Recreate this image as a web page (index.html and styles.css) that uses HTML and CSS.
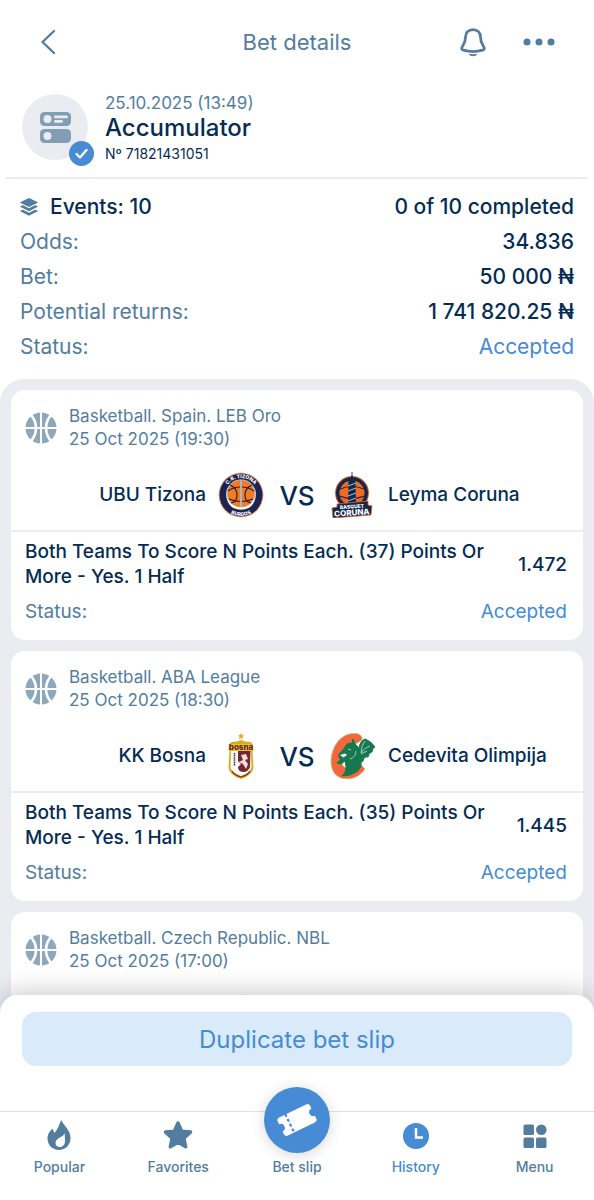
FILE: index.html
```html
<!DOCTYPE html>
<html lang="en">
<head>
  <meta charset="UTF-8">
  <meta name="viewport" content="width=device-width, initial-scale=1.0">
  <title>Bet details</title>
  <link rel="stylesheet" href="styles.css">
</head>
<body>
  <!-- Shared icons -->
  <svg class="sprite" aria-hidden="true">
    <symbol id="ball" viewBox="0 0 32 32">
      <circle cx="16" cy="16" r="15.5" fill="#8da8bd"/>
      <g fill="none" stroke="#fff" stroke-width="2">
        <path d="M16 0v32M0 16h32"/>
        <path d="M5 2Q11 8 11 16T5 30M27 2Q21 8 21 16T27 30" stroke-width="2.6"/>
      </g>
    </symbol>
  </svg>

  <div class="app">
    <header class="topbar">
      <button class="icon-button" aria-label="Back">
        <svg width="16" height="26" viewBox="0 0 16 26"><path d="M14 2 2.5 13 14 24" fill="none" stroke="#527d9f" stroke-width="2.4" stroke-linecap="round" stroke-linejoin="round"/></svg>
      </button>
      <h1>Bet details</h1>
      <div class="topbar-actions">
        <button class="icon-button" aria-label="Notifications">
          <svg width="26" height="29" viewBox="0 0 26 29">
            <path d="M13 1.6c-4.800 0-7.400 3.200-7.500 7.400-.1 4.500-.6 6-2.600 8.700-1.700 2.500-1.700 3.700.5 4.400 5.700 1.700 13.500 1.700 19.200 0 2.200-.7 2.200-1.900.5-4.400-2-2.700-2.500-4.200-2.600-8.700-.1-4.200-2.700-7.400-7.500-7.400z" fill="none" stroke="#527d9f" stroke-width="2.800"/>
            <path d="M8.500 25.700q4.500.9 9 0-1.500 2.500-4.500 2.500t-4.500-2.500z" fill="#527d9f"/>
          </svg>
        </button>
        <button class="icon-button" aria-label="More">
          <svg width="32" height="8" viewBox="0 0 32 8" fill="#527d9f"><circle cx="4" cy="4" r="3.500"/><circle cx="16" cy="4" r="3.500"/><circle cx="28" cy="4" r="3.500"/></svg>
        </button>
      </div>
    </header>

    <main>
      <section class="bet-head">
        <div class="bet-type">
          <svg width="31" height="31" viewBox="0 0 31 31">
            <rect width="31" height="14" rx="4.500" fill="#819eb5"/>
            <rect y="17" width="31" height="14" rx="4.500" fill="#819eb5"/>
            <g fill="#eaecf2"><circle cx="7.500" cy="7" r="4"/><circle cx="7.500" cy="24" r="4"/><rect x="14" y="3.500" width="14" height="2.800" rx="1.400"/><rect x="14" y="8" width="9" height="2.800" rx="1.400"/></g>
          </svg>
          <svg class="bet-check" width="25" height="25" viewBox="0 0 25 25"><circle cx="12.500" cy="12.500" r="12.500" fill="#468bd4"/><path d="M7.500 13l3.500 3.500 6.500-7.500" fill="none" stroke="#fff" stroke-width="2.400" stroke-linecap="round" stroke-linejoin="round"/></svg>
        </div>
        <div>
          <p class="bet-date">25.10.2025 (13:49)</p>
          <h2>Accumulator</h2>
          <p class="bet-number">Nº 71821431051</p>
        </div>
      </section>

      <dl class="summary">
        <div class="summary-events">
          <dt>
            <svg width="18" height="18" viewBox="0 0 18 18" fill="#527d9f">
              <path d="M9 0 17.300 4Q18 4.500 17.300 5L9 9 .7 5Q0 4.500.7 4z"/>
              <path d="M.5 8 3 7.300 9 10.300l6-3 2.500.7q.5.600-.2 1L9 13.300.7 9Q0 8.600.5 8z"/>
              <path d="M.5 12.500 3 11.800l6 3 6-3 2.500.7q.5.600-.2 1L9 17.800.7 13.500q-.7-.4-.2-1z"/>
            </svg>
            Events: 10
          </dt>
          <dd>0 of 10 completed</dd>
        </div>
        <div><dt>Odds:</dt><dd>34.836</dd></div>
        <div><dt>Bet:</dt><dd>50 000 ₦</dd></div>
        <div><dt>Potential returns:</dt><dd>1 741 820.25 ₦</dd></div>
        <div><dt>Status:</dt><dd class="accepted">Accepted</dd></div>
      </dl>

      <section class="events">
        <article class="card">
          <div class="card-meta">
            <svg class="sport" width="32" height="32"><use href="#ball"/></svg>
            <p>Basketball. Spain. LEB Oro<br>25 Oct 2025 (19:30)</p>
          </div>
          <div class="teams">
            <span class="team home">UBU Tizona</span>
            <svg class="crest" viewBox="0 0 46 46">
              <circle cx="23" cy="23" r="22.500" fill="#f0a184"/>
              <circle cx="23" cy="23" r="21.500" fill="#1d254f"/>
              <circle cx="23" cy="22.500" r="15" fill="#fff"/>
              <circle cx="23" cy="22.500" r="15" fill="#1d254f" opacity=".25"/>
              <circle cx="23" cy="21.500" r="13.500" fill="#f47b20"/>
              <g fill="none" stroke="#29203c" stroke-width="1.200">
                <path d="M10 19q5-4 13-4t13 4M12 13q7 3 7 10t-6 8M34 13q-7 3-7 10t6 8M11 27q12 5 24 0"/>
                <path d="M23 8v29" stroke="#b3b8c0" stroke-width="1.800"/>
              </g>
              <path d="M9 26q4 9.500 14 9.500T37 26q-2 11.500-14 11.500T9 26z" fill="#fff"/>
              <path id="tizonaTop" d="M6 23A17 17 0 0 1 40 23" fill="none"/>
              <path id="tizonaBottom" d="M2 23a21 21 0 0 0 42 0" fill="none"/>
              <text class="crest-text"><textPath href="#tizonaTop" startOffset="50%">C.B. TIZONA</textPath></text>
              <text class="crest-text"><textPath href="#tizonaBottom" startOffset="50%">BURGOS</textPath></text>
            </svg>
            <span class="versus">VS</span>
            <svg class="crest" viewBox="0 0 46 46">
              <path d="M22 0v7" stroke="#2d4b5c" stroke-width="1"/>
              <circle cx="22" cy="21" r="17" fill="#e8602c"/>
              <circle cx="22" cy="21" r="16" fill="#12284a"/>
              <circle cx="22" cy="21" r="12.500" fill="#f26a21"/>
              <path d="M10 17q12-5 24 0M9.500 24q12 5 25 0" fill="none" stroke="#12284a" stroke-width="1.200"/>
              <path d="M18.500 9l3.500-6 3.500 6 .5 26h-8z" fill="#12284a"/>
              <path d="M18 14l8-3M18 19l8-3M18 24l8-3M18 29l8-3" stroke="#a9bed0" stroke-width="1"/>
              <path d="M7 32l31-3v4l4 1-1 9-38 3-1-10 5-1z" fill="#12284a" stroke="#e8602c" stroke-width=".8"/>
              <text class="crest-text" x="22" y="36.500" transform="rotate(-4 22 36)">BASQUET</text>
              <text class="crest-text large" x="22" y="43.500" transform="rotate(-4 22 43)">CORUNA</text>
            </svg>
            <span class="team">Leyma Coruna</span>
          </div>
          <div class="market">
            <h3>Both Teams To Score N Points Each. (37) Points Or More - Yes. 1 Half</h3>
            <strong>1.472</strong>
          </div>
          <div class="card-status"><span>Status:</span><span class="accepted">Accepted</span></div>
        </article>

        <article class="card">
          <div class="card-meta">
            <svg class="sport" width="32" height="32"><use href="#ball"/></svg>
            <p>Basketball. ABA League<br>25 Oct 2025 (18:30)</p>
          </div>
          <div class="teams">
            <span class="team home">KK Bosna</span>
            <svg class="crest" viewBox="0 0 46 46">
              <path d="M23 0l1 2 2 .2-1.500 1.500.5 2.300-2-1-2 1 .5-2.300L20 2.200l2-.2z" fill="#efa72d"/>
              <path d="M12 11q0-2 2-2 5 0 9-2 4 2 9 2 2 0 2 2l1.500 23q-.5 8-12.500 12Q11 42 10.500 34z" fill="#d7ad1d"/>
              <path d="M13 18h20l.5 16q-1 6-10.500 9-9.500-3-10.500-9z" fill="#fff"/>
              <path d="M20 18h12.500l-.5 16q-2 5-6.500 5-5.500 0-5.500-5l3-3-3-3z" fill="#722733"/>
              <path d="M23 22l5-1 2 5-3 1 3 4-2 5-3-5-4-2 4-2z" fill="#f4ddd4"/>
              <path d="M16.500 20v13" stroke="#62323a" stroke-width="1.600" stroke-dasharray="1.500 .6"/>
              <path d="M11 11h24l.5 7h-25z" fill="#edbd2d"/>
              <text class="crest-text bosna" x="23" y="17">bosna</text>
              <path d="M14 38q2 4 9 6 7-2 9-6" fill="none" stroke="#842c2d" stroke-width="1.200"/>
            </svg>
            <span class="versus">VS</span>
            <svg class="crest" viewBox="0 0 46 46">
              <path d="M27 .5C14-1 3 9 1 26c-1 13 6 20 16 20 8 0 14-4 18-10l-7-8c-3 6-6 8-11 7-5-1-6-5-4-12 2-8 7-13 13-12l6-4q1-5-5-6.500z" fill="#f1683a" stroke="#c5cd9c" stroke-width=".8"/>
              <path d="M9 21l4-4 4-6 5-1 1-4 2 5 4 4q1-7 6-9 6 2 10 8-3 1-3 5-3 0-4 5-4-1-5 4-3 1-2 5l-3 5-8 4-8 1q5-4 4-10l-1-5-4 3-4-1 4-4-2-1z" fill="#15784f" stroke="#15784f" stroke-width="1" stroke-linejoin="round"/>
              <path d="M31 20q0-7 4-12M31 20q4-6 9-7M31 21l6-3M18 16l3 1M20 26q6-2 6-8" fill="none" stroke="#9ed0b6" stroke-width="1"/>
              <path d="M10 22l5-1.500 2 1.500-3.500 2.500z" fill="#fff"/>
            </svg>
            <span class="team">Cedevita Olimpija</span>
          </div>
          <div class="market">
            <h3>Both Teams To Score N Points Each. (35) Points Or More - Yes. 1 Half</h3>
            <strong>1.445</strong>
          </div>
          <div class="card-status"><span>Status:</span><span class="accepted">Accepted</span></div>
        </article>

        <article class="card">
          <div class="card-meta">
            <svg class="sport" width="32" height="32"><use href="#ball"/></svg>
            <p>Basketball. Czech Republic. NBL<br>25 Oct 2025 (17:00)</p>
          </div>
          <div class="teams">
            <span class="team home"></span>
            <svg class="crest" viewBox="0 0 46 46"><path d="M22 1.500q2-1.500 4 0l11 11-3 25-9 7-10-7-3-25z" fill="#242a34"/></svg>
          </div>
        </article>
      </section>
    </main>

    <footer class="bottom">
      <div class="duplicate">
        <button>Duplicate bet slip</button>
      </div>
      <nav class="tabs">
        <a href="#popular">
          <svg width="24" height="30" viewBox="0 0 24 30"><path d="M14.500 0c1 5 9 9 9 18 0 7-5 12-11.500 12S.5 25 .5 18.500C.5 14 3 11 5.500 8.500c.8 2 1.200 3.200 2 4.300C11 9.500 12 4 14.500 0z" fill="#527d9f"/><path d="M17.500 13c0 4-9 4.500-9 10 0 2.500 1.800 4 4.200 4 3.300 0 5.300-2.500 5.300-6 0-3-.2-5-.5-8z" fill="#fff"/></svg>
          Popular
        </a>
        <a href="#favorites">
          <svg width="30" height="30" viewBox="0 0 30 30"><path d="M15 3l3.600 8.200 8.900.9-6.700 6 1.900 8.700-7.700-4.500-7.700 4.500 1.900-8.700-6.700-6 8.900-.9z" fill="#527d9f" stroke="#527d9f" stroke-width="3.500" stroke-linejoin="round"/></svg>
          Favorites
        </a>
        <a href="#slip">
          <span class="slip-circle">
            <svg width="40" height="40" viewBox="0 0 40 40"><g transform="rotate(-26 20 20)">
              <path d="M5 10h30q3 0 3 3v3a4 4 0 0 0 0 8v3q0 3-3 3H5q-3 0-3-3v-3a4 4 0 0 0 0-8v-3q0-3 3-3z" fill="#fff"/>
              <path d="M12 9.500v22" stroke="#468bd4" stroke-width="2.200" stroke-dasharray="3 2.400"/>
            </g></svg>
          </span>
          Bet slip
        </a>
        <a href="#history" class="active">
          <svg width="26" height="30" viewBox="0 0 26 30"><circle cx="13" cy="16" r="13" fill="#468bd4"/><path d="M13 8v9.500h7" fill="none" stroke="#fff" stroke-width="2.500"/></svg>
          History
        </a>
        <a href="#menu">
          <svg width="24" height="30" viewBox="0 0 24 30" fill="#527d9f"><rect x=".5" y="4.500" width="10.500" height="10.500" rx="1.500"/><circle cx="18.300" cy="9.700" r="5.300"/><rect x=".5" y="17.500" width="10.500" height="10.500" rx="1.500"/><rect x="13" y="17.500" width="10.500" height="10.500" rx="1.500"/></svg>
          Menu
        </a>
      </nav>
    </footer>
  </div>
</body>
</html>
```
FILE: styles.css
```css
* {
  box-sizing: border-box;
}

body {
  margin: 0;
  font-family: Inter, "Open Sans", sans-serif;
  background: #fff;
  color: #052c54;
}

h1, h2, h3, p, dl, dd {
  margin: 0;
  font-weight: 400;
}

button {
  font: inherit;
  border: 0;
  cursor: pointer;
}

svg {
  display: block;
  flex: none;
}

.sprite {
  position: absolute;
  width: 0;
  height: 0;
}

.app {
  display: flex;
  flex-direction: column;
  height: 100vh;
}

/* Top bar */
.topbar {
  display: grid;
  grid-template-columns: 1fr auto 1fr;
  align-items: center;
  height: 84px;
  padding: 0 32px;
}

.topbar h1 {
  font-size: 22px;
  line-height: 28px;
  color: #527d9f;
}

.icon-button {
  display: flex;
  justify-content: center;
  width: 32px;
  padding: 0;
  background: none;
}

.topbar-actions {
  display: flex;
  align-items: center;
  justify-content: flex-end;
  gap: 34px;
  margin-right: 7px;
}

main {
  flex: 1;
  min-height: 0;
  overflow-y: auto;
  scrollbar-width: none;
}

/* Bet header */
.bet-head {
  display: flex;
  gap: 17px;
  margin: 0 6px;
  padding: 8px 16px 11px;
  border-bottom: 2px solid #eaecf2;
}

.bet-type {
  position: relative;
  display: flex;
  align-items: center;
  justify-content: center;
  width: 66px;
  height: 66px;
  margin-top: 2px;
  border-radius: 50%;
  background: #eaecf2;
}

.bet-check {
  position: absolute;
  right: -6px;
  bottom: -6px;
}

.bet-date {
  font-size: 17px;
  line-height: 22px;
  color: #527d9f;
}

.bet-head h2 {
  font-size: 24px;
  font-weight: 500;
  line-height: 28px;
}

.bet-number {
  font-size: 14px;
  line-height: 24px;
}

/* Totals */
.summary {
  padding: 10px 20px 15px;
  font-size: 21px;
  line-height: 35px;
}

.summary div {
  display: flex;
  justify-content: space-between;
}

.summary dt {
  display: flex;
  align-items: center;
  gap: 12px;
  color: #527d9f;
}

.summary dd {
  font-weight: 500;
}

.summary .summary-events dt {
  font-weight: 500;
  color: #052c54;
}

.summary .accepted,
.accepted {
  font-weight: 400;
  color: #468bd4;
}

/* Events */
.events {
  display: flex;
  flex-direction: column;
  gap: 11px;
  padding: 11px 11px 40px;
  border-radius: 24px 24px 0 0;
  background: #eaecf2;
}

.card {
  padding: 15px 0 16px;
  border-radius: 14px;
  background: #fff;
}

.card-meta {
  display: flex;
  align-items: center;
  gap: 12px;
  padding: 0 14px;
  font-size: 17px;
  line-height: 23px;
  color: #527d9f;
}

.teams {
  display: grid;
  grid-template-columns: 1fr 46px 66px 46px 1fr;
  align-items: center;
  height: 81px;
  padding-top: 9px;
  border-bottom: 2px solid #eaecf2;
}

.crest {
  width: 46px;
  height: 46px;
}

.crest-text {
  font-size: 5px;
  font-weight: 800;
  text-anchor: middle;
  fill: #fff;
}

.crest-text.large {
  font-size: 8px;
}

.crest-text.bosna {
  font-size: 8px;
  fill: #642b25;
}

.team {
  padding: 0 12px;
  font-size: 19px;
  font-weight: 500;
  line-height: 24px;
}

.team.home {
  text-align: right;
}

.versus {
  font-size: 26px;
  font-weight: 500;
  text-align: center;
}

.market {
  display: flex;
  align-items: center;
  justify-content: space-between;
  gap: 20px;
  padding: 7px 16px 0 14px;
}

.market h3,
.market strong {
  font-size: 19px;
  font-weight: 500;
  line-height: 25px;
}

.card-status {
  display: flex;
  justify-content: space-between;
  padding: 11px 16px 0 14px;
  font-size: 19px;
  line-height: 24px;
  color: #527d9f;
}

/* Bottom sheet and tabs */
.bottom {
  position: relative;
  margin-top: -16px;
  border-radius: 18px 18px 0 0;
  background: #fff;
  box-shadow: 0 -4px 24px rgba(0, 0, 0, 0.2);
}

.duplicate {
  padding: 17px 22px 45px;
}

.duplicate button {
  width: 100%;
  height: 54px;
  padding: 0;
  border-radius: 14px;
  background: #d9ebfb;
  color: #468bd4;
  font-size: 24px;
}

/* The slip circle is taller than the row and rises over its top border */
.tabs {
  display: grid;
  grid-template-columns: repeat(5, 1fr);
  grid-template-rows: 88px;
  border-top: 1px solid #dfe2e7;
}

.tabs a {
  display: flex;
  flex-direction: column;
  align-items: center;
  justify-content: flex-end;
  gap: 7px;
  padding-bottom: 23px;
  font-size: 14px;
  font-weight: 500;
  line-height: 20px;
  text-decoration: none;
  color: #527d9f;
}

.tabs .active {
  color: #468bd4;
}

.slip-circle {
  display: flex;
  align-items: center;
  justify-content: center;
  flex: none;
  width: 66px;
  height: 66px;
  margin-bottom: -3px;
  border-radius: 50%;
  background: #468bd4;
  box-shadow: 0 2px 14px rgba(0, 0, 0, 0.16);
}
```
